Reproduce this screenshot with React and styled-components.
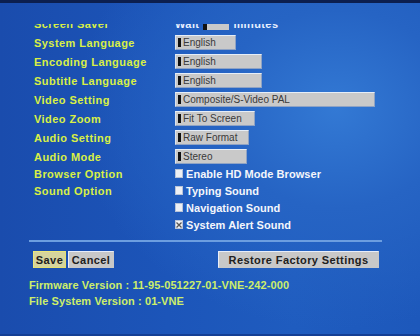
import React from 'react'
import styled, { createGlobalStyle } from 'styled-components'

const GlobalStyle = createGlobalStyle`
  html, body {
    margin: 0;
    padding: 0;
    background: #0b1d4a;
  }
`

const Screen = styled.div`
  width: 420px;
  height: 336px;
  overflow: hidden;
  display: flex;
  flex-direction: column;
  font-family: 'Liberation Sans', Arial, sans-serif;
  border-top: 3px solid #0c1f4f;
  border-bottom: 2px solid #143f95;
  box-sizing: border-box;
  background:
    radial-gradient(ellipse 260px 220px at 80% 32%, #3379d4 0%, #2664c4 45%, rgba(30, 84, 184, 0) 100%),
    linear-gradient(90deg, #1a4cad 0%, #1c55b9 40%, #1f5cbf 70%, #1d58bb 100%);
`

const Viewport = styled.div`
  margin-top: 21px;
  height: 210px;
  overflow: hidden;
`

const List = styled.div`
  margin-top: ${(p) => p.$shift}px;
  padding-left: 34px;
  display: grid;
  grid-template-columns: 141px 1fr;
  grid-auto-rows: ${(p) => p.$row}px;
`

const Label = styled.div`
  display: flex;
  align-items: center;
  color: #d9f045;
  font-weight: bold;
  font-size: 11px;
  letter-spacing: 0.45px;
  white-space: nowrap;
`

const Cell = styled.div`
  display: flex;
  align-items: center;
`

const Select = styled.div`
  width: ${(p) => p.$w}px;
  height: 15px;
  box-sizing: border-box;
  display: flex;
  align-items: center;
  gap: 2px;
  padding-left: 2px;
  background: #c9c9c9;
  border-top: 1px solid #e6eef8;
  border-left: 1px solid #dde4ee;
  border-bottom: 1px solid #8fa3c4;
  border-right: 1px solid #8fa3c4;
  color: #3a3a3a;
  font-size: 10px;
  white-space: nowrap;
`

const Marker = styled.span`
  width: 3px;
  height: 9px;
  background: #111;
  flex: none;
`

const Wait = styled.div`
  display: flex;
  align-items: center;
  gap: 4px;
  color: #e8f0ff;
  font-weight: bold;
  font-size: 11px;
  letter-spacing: 0.4px;
`

const WaitBox = styled.span`
  width: 26px;
  height: 12px;
  box-sizing: border-box;
  background: #c9c9c9;
  border-left: 4px solid #111;
`

const Check = styled.div`
  display: flex;
  align-items: center;
  gap: 3px;
  color: #f4f6fb;
  font-weight: bold;
  font-size: 11px;
  letter-spacing: 0.05px;
  white-space: nowrap;
`

const Box = styled.span`
  width: 8px;
  height: 9px;
  background: #eef0f4;
  border: 1px solid #b8c4d8;
  box-sizing: border-box;
  display: flex;
  align-items: center;
  justify-content: center;
  flex: none;
`

const Divider = styled.div`
  margin: 6px 38px 0 29px;
  height: 2px;
  background: #6c9ee0;
`

const ButtonBar = styled.div`
  margin-top: 9px;
  padding: 0 41px 0 33px;
  display: flex;
  align-items: center;
  gap: 2px;
`

const Button = styled.div`
  height: 17px;
  box-sizing: border-box;
  display: flex;
  align-items: center;
  justify-content: center;
  padding: 0 4px;
  width: ${(p) => p.$w}px;
  margin-left: ${(p) => (p.$push ? 'auto' : '0')};
  font-size: 11px;
  font-weight: bold;
  letter-spacing: 0.4px;
  color: #202020;
  background: ${(p) => (p.$active ? '#d6d49c' : '#c8c8c8')};
  border: 1px solid ${(p) => (p.$active ? '#e4e070' : '#c8c8c8')};
  border-top-color: ${(p) => (p.$active ? '#ece87a' : '#e8eefa')};
  border-left-color: ${(p) => (p.$active ? '#ece87a' : '#e8eefa')};
`

const Info = styled.div`
  margin-top: ${(p) => p.$mt}px;
  padding-left: 29px;
  color: #cdee6a;
  font-size: 11px;
  font-weight: bold;
  letter-spacing: 0.1px;
`

const selects = [
  ['System Language', 'English', 61],
  ['Encoding Language', 'English', 87],
  ['Subtitle Language', 'English', 87],
  ['Video Setting', 'Composite/S-Video PAL', 200],
  ['Video Zoom', 'Fit To Screen', 80],
  ['Audio Setting', 'Raw Format', 74],
  ['Audio Mode', 'Stereo', 72],
]

const checks = [
  ['Browser Option', 'Enable HD Mode Browser', false],
  ['Sound Option', 'Typing Sound', false],
  ['', 'Navigation Sound', false],
  ['', 'System Alert Sound', true],
]

function CheckItem({ text, on }) {
  return (
    <Check>
      <Box>
        {on && (
          <svg width="6" height="6" viewBox="0 0 6 6">
            <path d="M0.5 0.5 L5.5 5.5 M5.5 0.5 L0.5 5.5" stroke="#555" strokeWidth="1.3" />
          </svg>
        )}
      </Box>
      {text}
    </Check>
  )
}

export default function App() {
  return (
    <Screen>
      <GlobalStyle />
      <Viewport>
        <List $row={19} $shift={-10}>
          <Label>Screen Saver</Label>
          <Cell>
            <Wait>
              Wait <WaitBox /> minutes
            </Wait>
          </Cell>
          {selects.map(([label, value, w]) => (
            <React.Fragment key={label}>
              <Label>{label}</Label>
              <Cell>
                <Select $w={w}>
                  <Marker />
                  {value}
                </Select>
              </Cell>
            </React.Fragment>
          ))}
        </List>
        <List $row={17} $shift={-1}>
          {checks.map(([label, text, on]) => (
            <React.Fragment key={text}>
              <Label>{label}</Label>
              <Cell>
                <CheckItem text={text} on={on} />
              </Cell>
            </React.Fragment>
          ))}
        </List>
      </Viewport>
      <Divider />
      <ButtonBar>
        <Button $w={33} $active>Save</Button>
        <Button $w={46}>Cancel</Button>
        <Button $w={161} $push>Restore Factory Settings</Button>
      </ButtonBar>
      <Info $mt={11}>Firmware Version : 11-95-051227-01-VNE-242-000</Info>
      <Info $mt={4}>File System Version : 01-VNE</Info>
    </Screen>
  )
}
